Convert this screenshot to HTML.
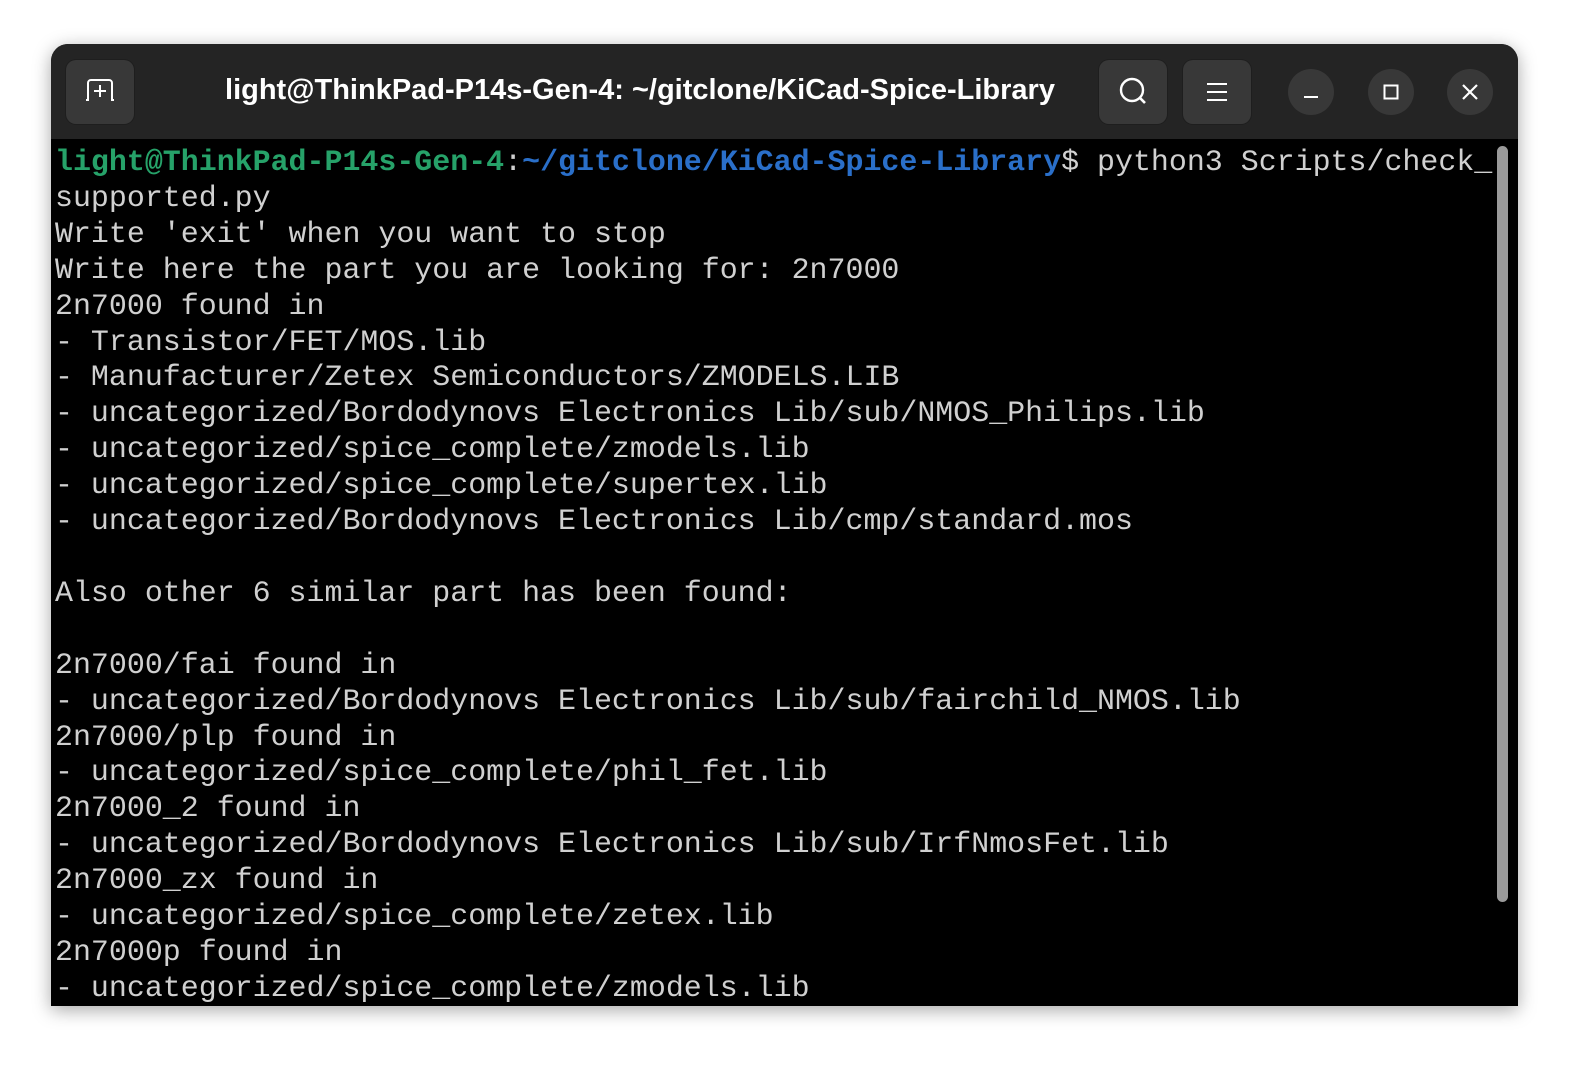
<!DOCTYPE html>
<html><head><meta charset="utf-8"><style>
html,body{margin:0;padding:0;width:1572px;height:1066px;background:#fff;overflow:hidden}
.win{position:absolute;left:51px;top:44px;width:1467px;height:962px;background:#000;border-radius:17px 17px 0 0;box-shadow:0 4px 18px rgba(0,0,0,.35);overflow:hidden}
.hdr{position:absolute;left:0;top:0;width:100%;height:95px;background:#242424}
.btn{position:absolute;top:16px;width:68px;height:64px;background:#383838;border-radius:10px;box-shadow:0 0 0 1px #1e1e1e}
.circ{position:absolute;top:25px;width:46px;height:46px;border-radius:50%;background:#383838}
.title{position:absolute;left:169px;width:840px;top:30px;text-align:center;color:#fff;font:bold 29px "Liberation Sans",sans-serif;white-space:nowrap}
.term{position:absolute;left:4px;top:101px;font-family:"Liberation Mono",monospace;font-size:29.95px;line-height:35.9px;color:#d0d0d0;white-space:pre}
.g{color:#26a269;font-weight:bold}.b{color:#2a6fc9;font-weight:bold}
.sb{position:absolute;left:1446px;top:102px;width:11px;height:756px;background:#9a9a9a;border-radius:6px}
svg{position:absolute}
</style></head><body>
<div class="win">
<div class="hdr">
<div class="btn" style="left:15px"><svg width="68" height="64"><path d="M20 40h2V23a3 3 0 0 1 3-3h18a3 3 0 0 1 3 3v17h2M34 25v12M28 31h12" stroke="#fff" stroke-width="2" fill="none"/></svg></div>
<div class="title">light@ThinkPad-P14s-Gen-4: ~/gitclone/KiCad-Spice-Library</div>
<div class="btn" style="left:1048px"><svg width="68" height="64"><circle cx="33" cy="30" r="11" stroke="#fff" stroke-width="2.4" fill="none"/><path d="M41 38l5 5" stroke="#fff" stroke-width="2.6"/></svg></div>
<div class="btn" style="left:1132px"><svg width="68" height="64"><path d="M24 24h20M24 32h20M24 40h20" stroke="#fff" stroke-width="2"/></svg></div>
<div class="circ" style="left:1237px"><svg width="46" height="46"><path d="M16 28h14" stroke="#fff" stroke-width="2"/></svg></div>
<div class="circ" style="left:1317px"><svg width="46" height="46"><rect x="16.5" y="16.5" width="13" height="13" stroke="#fff" stroke-width="2" fill="none"/></svg></div>
<div class="circ" style="left:1396px"><svg width="46" height="46"><path d="M16 16l14 14M30 16l-14 14" stroke="#fff" stroke-width="2.2"/></svg></div>
</div>
<div class="term"><span class="g">light@ThinkPad-P14s-Gen-4</span>:<span class="b">~/gitclone/KiCad-Spice-Library</span>$ python3 Scripts/check_
supported.py
Write 'exit' when you want to stop
Write here the part you are looking for: 2n7000
2n7000 found in
- Transistor/FET/MOS.lib
- Manufacturer/Zetex Semiconductors/ZMODELS.LIB
- uncategorized/Bordodynovs Electronics Lib/sub/NMOS_Philips.lib
- uncategorized/spice_complete/zmodels.lib
- uncategorized/spice_complete/supertex.lib
- uncategorized/Bordodynovs Electronics Lib/cmp/standard.mos

Also other 6 similar part has been found:

2n7000/fai found in
- uncategorized/Bordodynovs Electronics Lib/sub/fairchild_NMOS.lib
2n7000/plp found in
- uncategorized/spice_complete/phil_fet.lib
2n7000_2 found in
- uncategorized/Bordodynovs Electronics Lib/sub/IrfNmosFet.lib
2n7000_zx found in
- uncategorized/spice_complete/zetex.lib
2n7000p found in
- uncategorized/spice_complete/zmodels.lib</div>
<div class="sb"></div>
</div>
</body></html>
